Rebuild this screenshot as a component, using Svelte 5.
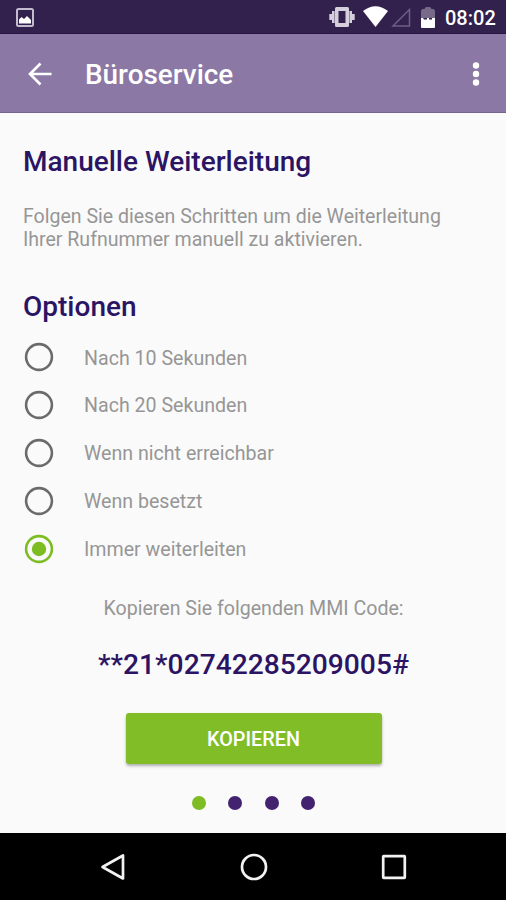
<script>
  const options = [
    'Nach 10 Sekunden',
    'Nach 20 Sekunden',
    'Wenn nicht erreichbar',
    'Wenn besetzt',
    'Immer weiterleiten'
  ];
  let selected = $state(4);
  const pages = [0, 1, 2, 3];
</script>

<div class="screen">
  <div class="status">
    <svg class="picture" width="18" height="19" viewBox="0 0 18 19">
      <rect x="1" y="1" width="16" height="17" rx="1.5" fill="none" stroke="#c3bccf" stroke-width="2" />
      <path d="M3 15.500V11.500l2.500-2.500 2.500 2 3-3 4 4v3.500z" fill="#fff" />
    </svg>
    <svg class="system" width="112" height="22" viewBox="0 0 112 22">
      <g fill="#d5d0dc">
        <path fill-rule="evenodd" d="M7.5 1h11a1.5 1.5 0 0 1 1.5 1.500v17a1.500 1.500 0 0 1-1.500 1.500h-11A1.500 1.500 0 0 1 6 19.500v-17A1.500 1.500 0 0 1 7.500 1zM9.500 5v12h7V5z" />
        <path d="M3 5h2.600v12H3zM.3 8h2.700v6H.3zM20.400 5H23v12h-2.600zM23 8h2.700v6H23z" />
      </g>
      <path d="M34 5Q46.500-4.500 59 5L46.500 21z" fill="#fff" />
      <path d="M64 20H80.500V3.500z" fill="none" stroke="#6d5f83" stroke-width="1.500" />
      <path d="M92 12V5Q92 3 94 3H95.500Q96 1 97.500 1h3Q102 1 102.500 3H104Q106 3 106 5V12z" fill="#766a88" />
      <path d="M92 12h2l1 1.500h3V12h2v1.500h3V12h3v9a1 1 0 0 1-1 1H93a1 1 0 0 1-1-1z" fill="#fff" />
    </svg>
    <span class="time">08:02</span>
  </div>

  <header>
    <svg class="back" width="24" height="24" viewBox="0 0 24 24" fill="none" stroke="#fff" stroke-width="2.700">
      <path d="M23.500 12H2.500M12.500 1.500 2 12l10.500 10.500" />
    </svg>
    <span class="title"><b>Büroservice</b></span>
    <svg class="more" width="8" height="26" viewBox="0 0 8 26" fill="#fff">
      <circle cx="4" cy="4.500" r="3.200" /><circle cx="4" cy="13" r="3.200" /><circle cx="4" cy="21.500" r="3.200" />
    </svg>
  </header>

  <main>
    <h1>Manuelle Weiterleitung</h1>
    <p class="intro">Folgen Sie diesen Schritten um die Weiterleitung<br />Ihrer Rufnummer manuell zu aktivieren.</p>
    <h2>Optionen</h2>
    <div class="options" role="radiogroup">
      {#each options as option, i}
        <div class="option" role="radio" tabindex="0" aria-checked={selected === i}
          onclick={() => (selected = i)} onkeydown={(e) => e.key === ' ' && (selected = i)}>
          <svg class:on={selected === i} width="30" height="30" viewBox="0 0 30 30">
            <circle class="ring" cx="15" cy="15" r="12.900" />
            {#if selected === i}<circle class="core" cx="15" cy="15" r="7.200" />{/if}
          </svg>
          <span>{option}</span>
        </div>
      {/each}
    </div>
    <p class="hint">Kopieren Sie folgenden MMI Code:</p>
    <p class="code">**21*02742285209005#</p>
    <button>KOPIEREN</button>
    <div class="dots">
      {#each pages as page}
        <i class:current={page === 0}></i>
      {/each}
    </div>
  </main>

  <nav>
    <svg width="28" height="30" viewBox="0 0 28 30"><path d="M24 3.500v23L3.500 15z" /></svg>
    <svg width="28" height="30" viewBox="0 0 28 30"><circle cx="14" cy="15" r="12" /></svg>
    <svg width="28" height="30" viewBox="0 0 28 30"><rect x="3.200" y="4.200" width="21.600" height="21.600" rx=".5" /></svg>
  </nav>
</div>

<style>
  .screen {
    width: 506px;
    height: 900px;
    display: flex;
    flex-direction: column;
    overflow: hidden;
    background: #fafafa;
    font-family: Roboto, "Liberation Sans", sans-serif;
    color: #969696;
  }
  .status {
    box-sizing: border-box;
    height: 34px;
    display: flex;
    align-items: center;
    padding: 0 10px 0 16px;
    background: #32204d;
    border-bottom: 1px solid #291344;
  }
  .picture { margin-top: 1px; }
  .system { margin-left: auto; }
  .time {
    width: 51px;
    margin-left: 4px;
    font-size: 20px;
    font-weight: 500;
    line-height: 34px;
    margin-top: 2px;
    color: #fff;
    white-space: nowrap;
  }
  header {
    box-sizing: border-box;
    height: 79px;
    display: flex;
    align-items: center;
    padding: 0 26px 0 28px;
    background: #8b78a5;
    border-bottom: 1px solid #78658f;
    color: #fff;
  }
  .back, .more { margin-top: 1px; }
  .title { margin-left: 33px; font-size: 27.9px; line-height: 36px; padding-top: 3px; }
  .title b { font-weight: 500; }
  .more { margin-left: auto; }
  main {
    height: 720px;
    display: flex;
    flex-direction: column;
    padding: 0 23px;
  }
  h1, h2, p { margin: 0; white-space: nowrap; }
  h1, h2 {
    font-size: 28px;
    line-height: 36px;
    font-weight: 500;
    color: #2b1464;
  }
  h1 { margin-top: 31px; }
  .intro { margin-top: 25px; font-size: 19.55px; line-height: 23px; }
  h2 { margin-top: 38px; }
  .options { display: flex; flex-direction: column; margin-top: 8.5px; }
  .option {
    height: 47.8px;
    display: flex;
    align-items: center;
    font-size: 19.6px;
    outline: none;
  }
  .option svg { margin-left: 1px; }
  .option span { margin-left: 30px; padding-top: 1.5px; }
  .ring { fill: none; stroke: #6b6b6b; stroke-width: 2.6; }
  .on .ring { stroke: #7dbc22; }
  .core { fill: #7dbc22; }
  .hint { margin: 24.5px 0 0 1px; font-size: 19.6px; line-height: 24px; text-align: center; }
  .code {
    margin: 26px 0 0 1px;
    font-size: 28.2px;
    line-height: 36px;
    font-weight: 500;
    text-align: center;
    color: #2b1464;
  }
  button {
    align-self: center;
    width: 256px;
    height: 51px;
    margin: 30px 0 0 1px;
    padding: 2px 0 0;
    border: 0;
    border-radius: 3px;
    background: #81bd27;
    box-shadow: 0 2px 3px rgba(0, 0, 0, 0.3);
    color: #fff;
    font: 500 19.8px Roboto, "Liberation Sans", sans-serif;
  }
  .dots { display: flex; justify-content: center; gap: 22.5px; margin: 32px 0 0 1px; }
  .dots i { width: 14px; height: 14px; border-radius: 50%; background: #43226f; }
  .dots .current { background: #7dbc22; }
  nav {
    box-sizing: border-box;
    height: 67px;
    display: flex;
    justify-content: space-between;
    align-items: center;
    padding: 0 98px 0 99px;
    background: #000;
  }
  nav path, nav circle, nav rect { fill: none; stroke: #f2f2f2; stroke-width: 2.7; stroke-linejoin: round; }
</style>
